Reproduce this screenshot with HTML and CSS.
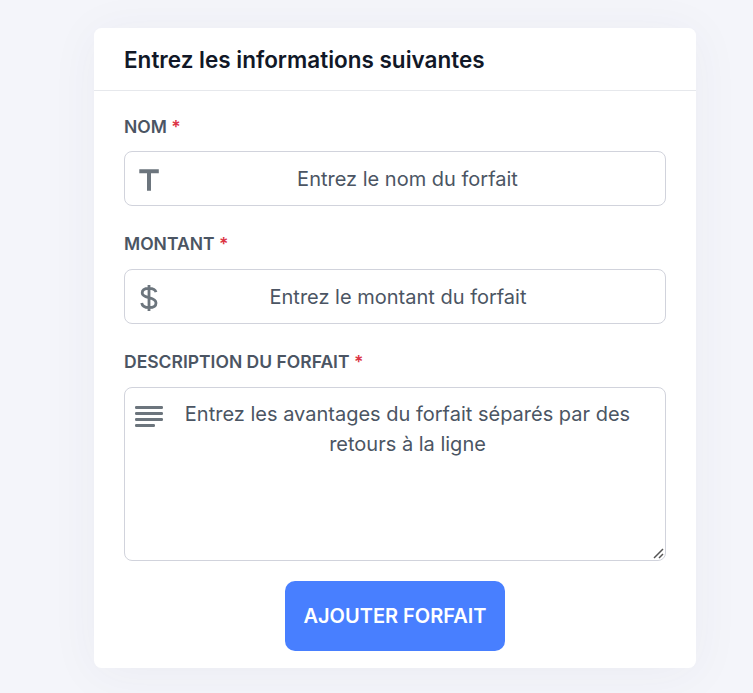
FILE: index.html
```html
<!DOCTYPE html>
<html lang="fr">
<head>
<meta charset="utf-8">
<title>Ajouter un forfait</title>
<link rel="stylesheet" href="styles.css">
</head>
<body>
<main class="card">
  <header class="card-header"><h1 class="title">Entrez les informations suivantes</h1></header>
  <form class="card-body">
    <label class="label" for="nom">NOM <span class="required">*</span></label>
    <div class="field">
      <svg class="icon" viewBox="0 0 30 30"><path d="M5.3 4.3H24.8V8.2H17V25.7H13V8.2H5.3Z"/></svg>
      <input class="control" id="nom" type="text" placeholder="Entrez le nom du forfait">
    </div>
    <label class="label" for="montant">MONTANT <span class="required">*</span></label>
    <div class="field field-amount">
      <svg class="icon icon-line" viewBox="0 0 30 30"><path d="M15 2V28M22 9.2C21.4 6.8 18.8 5.4 15 5.4C10.8 5.4 8.2 7.2 8.2 9.9C8.2 12.6 10.8 13.6 15 14.6C19.6 15.7 22 17 22 20.1C22 23 19.4 24.7 15 24.7C10.8 24.7 8.2 23 7.7 20.1"/></svg>
      <input class="control amount" id="montant" type="text" placeholder="Entrez le montant du forfait">
    </div>
    <label class="label" for="description">DESCRIPTION DU FORFAIT <span class="required">*</span></label>
    <div class="field field-area">
      <svg class="icon icon-rows" viewBox="0 0 30 30"><rect x="1" y="4" width="28" height="3" rx="1.2"/><rect x="1" y="10" width="28" height="3" rx="1.2"/><rect x="1" y="16" width="28" height="3" rx="1.2"/><rect x="1" y="22" width="20" height="3" rx="1.2"/></svg>
      <textarea class="control area" id="description" placeholder="Entrez les avantages du forfait séparés par des retours à la ligne"></textarea>
      <svg class="grip" viewBox="0 0 11 11"><path d="M1 10L10 1M6 10L10 6"/></svg>
    </div>
    <button class="submit" type="button">AJOUTER FORFAIT</button>
  </form>
</main>
</body>
</html>
```
FILE: styles.css
```css
* { box-sizing: border-box; }

body {
  margin: 0;
  height: 693px;
  overflow: hidden;
  padding: 28px 57px 0 94px;
  background: #f4f5fa;
  font-family: Inter, "Liberation Sans", sans-serif;
}

.card {
  height: 640px;
  background: #fff;
  border-radius: 7.5px;
  box-shadow: 0 5px 50px rgba(50, 60, 100, 0.05);
}

.card-header {
  display: flex;
  align-items: center;
  height: 63px;
  padding: 2px 30px 0;
  border-bottom: 1px solid #e6e8ec;
}

.title {
  margin: 0;
  font-size: 22.5px;
  font-weight: 600;
  line-height: 30px;
  color: #111827;
}

.card-body {
  display: flex;
  flex-direction: column;
  padding: 23px 30px 0;
}

.label {
  height: 26px;
  margin-bottom: 11px;
  font-size: 17.5px;
  font-weight: 600;
  line-height: 26px;
  color: #4b5563;
}

.required { color: #dc3545; }

.field {
  display: flex;
  position: relative;
  height: 55px;
  margin-bottom: 25px;
}

.field + .label { padding-bottom: 1px; height: 27px; }

.icon {
  position: absolute;
  left: 10px;
  top: 14px;
  width: 30px;
  height: 30px;
  fill: #6c757d;
}

.icon-line {
  fill: none;
  stroke: #6c757d;
  stroke-width: 2.8;
}

.icon-rows { top: 15px; }

.control {
  width: 100%;
  padding: 0 20px 0 45px;
  border: 1px solid #d1d3dc;
  border-radius: 8px;
  outline: 0;
  background: #fff;
  font: 400 20px/30px Inter, "Liberation Sans", sans-serif;
  color: #4b5563;
  text-align: center;
}

.control::placeholder { color: #4b5563; opacity: 1; }

.amount {
  padding-top: 1px;
  padding-right: 39px;
}

.field-area { height: 174px; margin-bottom: 20px; }

.area {
  padding-top: 11px;
  resize: none;
  overflow: hidden;
}

.grip {
  position: absolute;
  right: 2px;
  bottom: 2px;
  width: 11px;
  height: 11px;
  fill: none;
  stroke: #555;
  stroke-width: 1.5;
}

.submit {
  align-self: center;
  width: 220px;
  height: 70px;
  padding: 0;
  border: 0;
  border-radius: 10px;
  background: #487fff;
  font: 600 20px/30px Inter, "Liberation Sans", sans-serif;
  color: #fff;
}
```
